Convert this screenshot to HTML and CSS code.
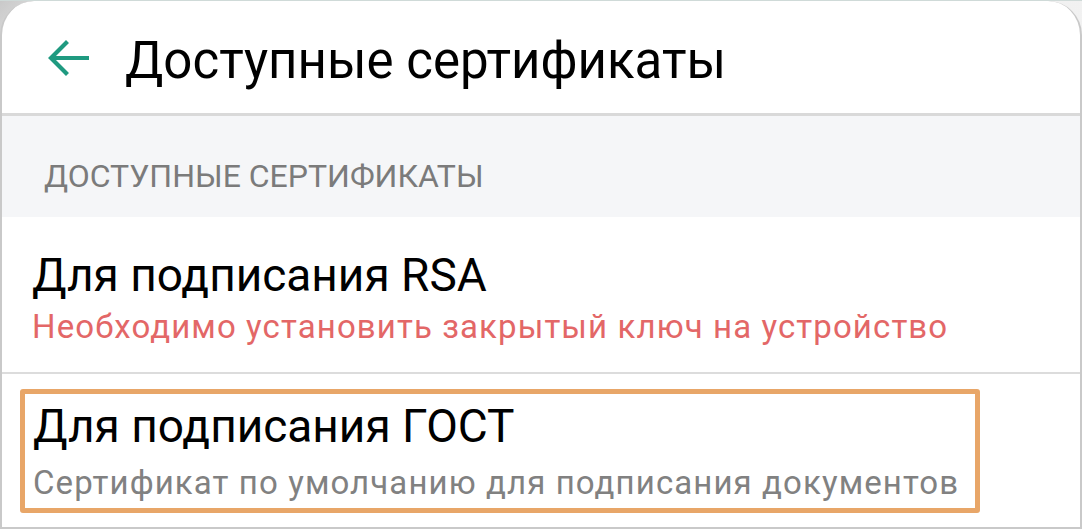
FILE: index.html
```html
<!DOCTYPE html>
<html lang="ru">
<head>
<meta charset="utf-8">
<link rel="stylesheet" href="styles.css">
</head>
<body>
<div class="frame">
  <div class="screen">
    <header class="appbar">
      <svg class="back" width="42" height="36" viewBox="0 0 42 36" aria-hidden="true">
        <path d="M40 18 H5 M19 3 L4 18 L19 33" fill="none" stroke="#1f9a80" stroke-width="4.2" stroke-linecap="square" stroke-linejoin="miter"/>
      </svg>
      <h1 class="title">Доступные сертификаты</h1>
    </header>
    <div class="section">ДОСТУПНЫЕ СЕРТИФИКАТЫ</div>
    <div class="item item-rsa">
      <div class="item-title">Для подписания RSA</div>
      <div class="item-sub error">Необходимо установить закрытый ключ на устройство</div>
    </div>
    <div class="item item-gost">
      <div class="highlight">
        <div class="item-title">Для подписания ГОСТ</div>
        <div class="item-sub">Сертификат по умолчанию для подписания документов</div>
      </div>
    </div>
  </div>
</div>
</body>
</html>
```

FILE: styles.css
```css
* { box-sizing: border-box; }
html, body { margin: 0; padding: 0; }
body {
  width: 1082px;
  height: 529px;
  font-family: Roboto, "Noto Sans", sans-serif;
  background: #ffffff;
  overflow: hidden;
}
.frame {
  width: 1082px;
  height: 529px;
  background: linear-gradient(135deg, #c9c9c9 0%, #ececec 6%, #f4f4f4 100%);
  border-top: 1px solid #cfdad8;
}
.screen {
  height: 528px;
  background: #ffffff;
  border-radius: 34px 34px 0 0;
  border-left: 2px solid #c9c9c9;
  border-right: 2px solid #c9c9c9;
  border-bottom: 2px solid #c9c9c9;
  overflow: hidden;
  display: flex;
  flex-direction: column;
}
.appbar {
  height: 115px;
  flex: none;
  display: flex;
  align-items: center;
  padding: 6px 0 0 45px;
  border-bottom: 3px solid #d9d9d9;
}
.back { flex: none; margin-bottom: 5px; }
.title {
  margin: 0 0 0 36px;
  font-size: 51px;
  line-height: 51px;
  font-weight: 400;
  color: #000;
}
.section {
  height: 101px;
  flex: none;
  background: #f5f6f8;
  color: #7b7b7b;
  font-size: 32px;
  padding: 42px 0 0 42px;
  line-height: 36px;
}
.item {
  flex: none;
}
.item-rsa {
  height: 157px;
  padding: 32px 0 0 30px;
  border-bottom: 2px solid #dcdcdc;
}
.item-title {
  font-size: 46px;
  line-height: 52px;
  color: #000;
}
.item-sub {
  font-size: 33px;
  line-height: 40px;
  letter-spacing: 1.1px;
  color: #818181;
}
.item-rsa .item-sub { margin-top: 6px; }
.item-sub.error { color: #e36767; }
.item-gost {
  padding: 15px 0 0 18px;
}
.highlight {
  width: 960px;
  height: 124px;
  border: 5px solid #e8a668;
  border-radius: 3px;
  padding: 6px 0 0 8px;
}
.highlight .item-sub { margin-top: 11px; }
```
